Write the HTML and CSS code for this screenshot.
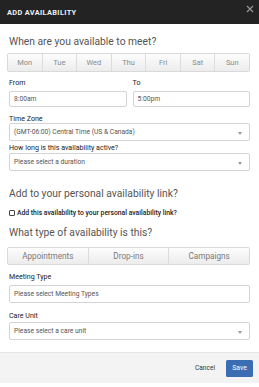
FILE: index.html
```html
<!DOCTYPE html>
<html>
<head>
<meta charset="utf-8">
<link rel="stylesheet" href="styles.css">
</head>
<body>
<div class="modal">
  <header class="hdr">
    <span class="title">ADD AVAILABILITY</span>
    <svg class="close" width="8" height="8" viewBox="0 0 8 8"><path d="M1 1L7 7M7 1L1 7" stroke="#9a9a9a" stroke-width="1.1"/></svg>
  </header>
  <div class="body">
    <h2 class="q q1">When are you available to meet?</h2>
    <div class="days">
      <span class="seg">Mon</span><span class="seg">Tue</span><span class="seg">Wed</span><span class="seg">Thu</span><span class="seg">Fri</span><span class="seg">Sat</span><span class="seg">Sun</span>
    </div>
    <div class="row2">
      <div class="col">
        <div class="lbl">From</div>
        <div class="input">8:00am</div>
      </div>
      <div class="col">
        <div class="lbl">To</div>
        <div class="input">5:00pm</div>
      </div>
    </div>
    <div class="lbl lbl-tz">Time Zone</div>
    <div class="select sel-tz">(GMT-06:00) Central Time (US &amp; Canada)<span class="caret"></span></div>
    <div class="lbl lbl-dur">How long is this availability active?</div>
    <div class="select sel-dur">Please select a duration<span class="caret"></span></div>
    <h2 class="q q2">Add to your personal availability link?</h2>
    <label class="check"><span class="box"></span>Add this availability to your personal availability link?</label>
    <h2 class="q q3">What type of availability is this?</h2>
    <div class="types">
      <span class="seg">Appointments</span><span class="seg">Drop-ins</span><span class="seg">Campaigns</span>
    </div>
    <div class="lbl lbl-mt">Meeting Type</div>
    <div class="input input-mt">Please select Meeting Types</div>
    <div class="lbl lbl-cu">Care Unit</div>
    <div class="select sel-cu">Please select a care unit<span class="caret"></span></div>
  </div>
  <footer class="ftr">
    <span class="cancel">Cancel</span>
    <span class="save">Save</span>
  </footer>
</div>
</body>
</html>
```

FILE: styles.css
```css
* { box-sizing: border-box; }
html, body { margin: 0; padding: 0; background: #fff; }
body { font-family: Roboto, "Noto Sans", Arial, sans-serif; color: #333; width: 259px; height: 387px; overflow: hidden; }
.modal { width: 259px; display: flex; flex-direction: column; }

.hdr { height: 24px; background: #232323; display: flex; align-items: center; justify-content: space-between; padding: 0 5px 0 7px; }
.title { color: #f2f2f2; font-size: 7.4px; font-weight: 700; letter-spacing: 0.35px; }
.close { display: block; margin-top: -7px; }

.body { padding: 11px 9px 0 7px; display: flex; flex-direction: column; }

.q { margin: 0; font-weight: 400; font-size: 10.3px; line-height: 13px; color: #555; padding-left: 2px; }
.q2 { margin-top: 16px; }
.q3 { margin-top: 9px; }

.days, .types { display: flex; border: 1px solid #d9d9d9; border-radius: 2px; overflow: hidden; }
.days { margin-top: 5px; height: 19px; }
.types { margin-top: 8px; height: 18px; }
.seg { flex: 1; display: flex; align-items: center; justify-content: center; background: linear-gradient(#fdfdfd, #ececec); color: #8c8c8c; font-size: 7.5px; border-left: 1px solid #dcdcdc; }
.seg:first-child { border-left: 0; }
.types .seg { font-size: 8.2px; color: #7a7a7a; }

.lbl { font-size: 7.1px; line-height: 8px; font-weight: 400; color: #222; padding-left: 2px; }
.row2 { display: flex; gap: 6px; margin-top: 7px; padding-left: 2px; }
.row2 .lbl { padding-left: 0; }
.col { flex: 1; display: flex; flex-direction: column; }
.col .input { margin: 4px 0 0 0; }

.input, .select { height: 16px; border: 1px solid #d4d4d4; border-radius: 2px; font-size: 6.7px; color: #555; display: flex; align-items: center; padding-left: 4px; background: #fff; margin-left: 2px; }
.select { height: 18px; position: relative; }
.caret { position: absolute; right: 7px; top: 8px; width: 0; height: 0; border-left: 2px solid transparent; border-right: 2px solid transparent; border-top: 3px solid #999; }

.lbl-tz { margin-top: 8px; }
.lbl-dur { margin-top: 3px; }
.sel-dur { margin-top: 1px; }
.lbl-mt { margin-top: 8px; }
.input-mt { margin-top: 4px; height: 18px; }
.lbl-cu { margin-top: 9px; }
.sel-cu { margin-top: 2px; }

.check { margin-top: 9px; height: 8px; display: flex; align-items: center; gap: 2px; font-size: 6.8px; font-weight: 500; color: #222; padding-left: 2px; }
.box { width: 6px; height: 6px; border: 0.8px solid #444; border-radius: 1px; background: #fff; flex: none; }

.ftr { margin-top: 12px; height: 31px; background: #f3f3f3; border-top: 1px solid #e6e6e6; display: flex; align-items: center; justify-content: flex-end; padding-right: 6px; gap: 11px; }
.cancel { font-size: 6.6px; color: #333; }
.save { width: 27px; height: 17px; background: #3b6db3; color: #fff; font-size: 6.8px; display: flex; align-items: center; justify-content: center; border-radius: 1.5px; }
```
